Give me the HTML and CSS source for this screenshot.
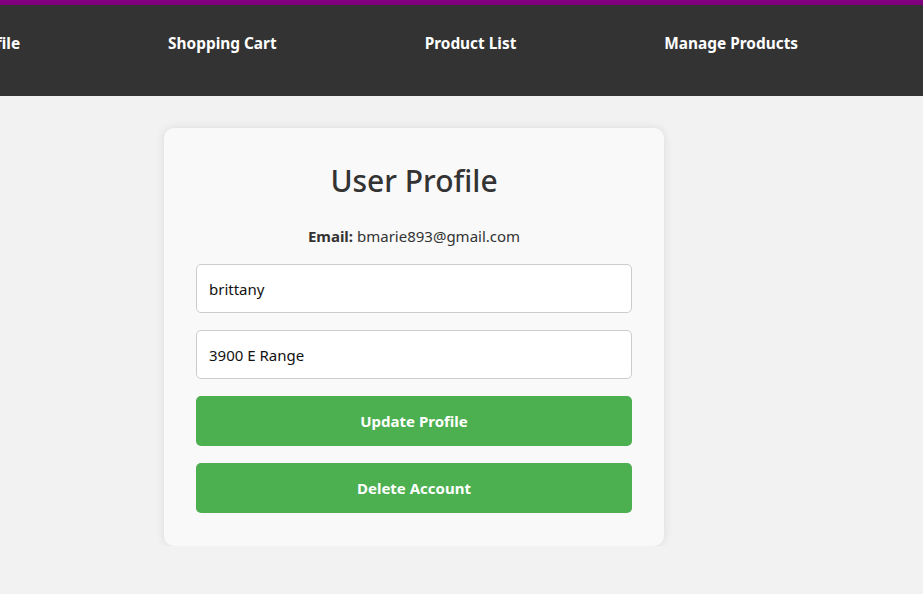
FILE: index.html
```html
<!DOCTYPE html>
<html lang="en">
<head>
<meta charset="utf-8">
<title>User Profile</title>
<link rel="stylesheet" href="styles.css">
</head>
<body>
<div class="topline"></div>
<nav class="nav">
  <ul class="nav-list">
    <li><a href="#">Profile</a></li>
    <li><a href="#">Shopping Cart</a></li>
    <li><a href="#">Product List</a></li>
    <li><a href="#">Manage Products</a></li>
  </ul>
</nav>
<main class="main">
  <section class="card">
    <h2 class="title">User Profile</h2>
    <p class="email"><strong>Email:</strong> bmarie893@gmail.com</p>
    <form class="form">
      <input class="field" type="text" value="brittany">
      <input class="field" type="text" value="3900 E Range">
      <button class="btn" type="button">Update Profile</button>
      <button class="btn" type="button">Delete Account</button>
    </form>
  </section>
</main>
</body>
</html>
```
FILE: styles.css
```css
* { box-sizing: border-box; }
html, body {
  margin: 0;
  padding: 0;
  background: #f2f2f2;
  font-family: "Noto Sans", "Open Sans", sans-serif;
  color: #333;
  overflow: hidden;
}
.topline {
  height: 5px;
  background: #800080;
}
.nav {
  background: #333;
  height: 91px;
  padding-top: 27px;
  overflow: hidden;
}
.nav-list {
  list-style: none;
  margin: 0 0 0 -30px;
  padding: 0;
  display: flex;
  gap: 148px;
  white-space: nowrap;
}
.nav-list a {
  color: #fff;
  text-decoration: none;
  font-weight: 700;
  font-size: 15.4px;
  line-height: 22px;
}
.main {
  padding: 32px 0 0 164px;
}
.card {
  width: 500px;
  background: #f9f9f9;
  border-radius: 10px;
  padding: 32px 32px 33px;
  box-shadow: 0 0 10px rgba(0,0,0,0.1);
}
.title {
  margin: 0;
  text-align: center;
  font-size: 30px;
  font-weight: 500;
  line-height: 42px;
  color: #333;
}
.email {
  margin: 23px 0 17px;
  text-align: center;
  font-size: 15px;
  line-height: 22px;
}
.form {
  display: flex;
  flex-direction: column;
  gap: 17px;
}
.field {
  height: 49px;
  border: 1px solid #ccc;
  border-radius: 5px;
  padding: 0 12px;
  font-family: inherit;
  font-size: 15px;
  color: #111;
  background: #fff;
}
.btn {
  height: 50px;
  border: none;
  border-radius: 5px;
  background: #4caf50;
  color: #fff;
  font-family: inherit;
  font-size: 15px;
  font-weight: 700;
}
```
